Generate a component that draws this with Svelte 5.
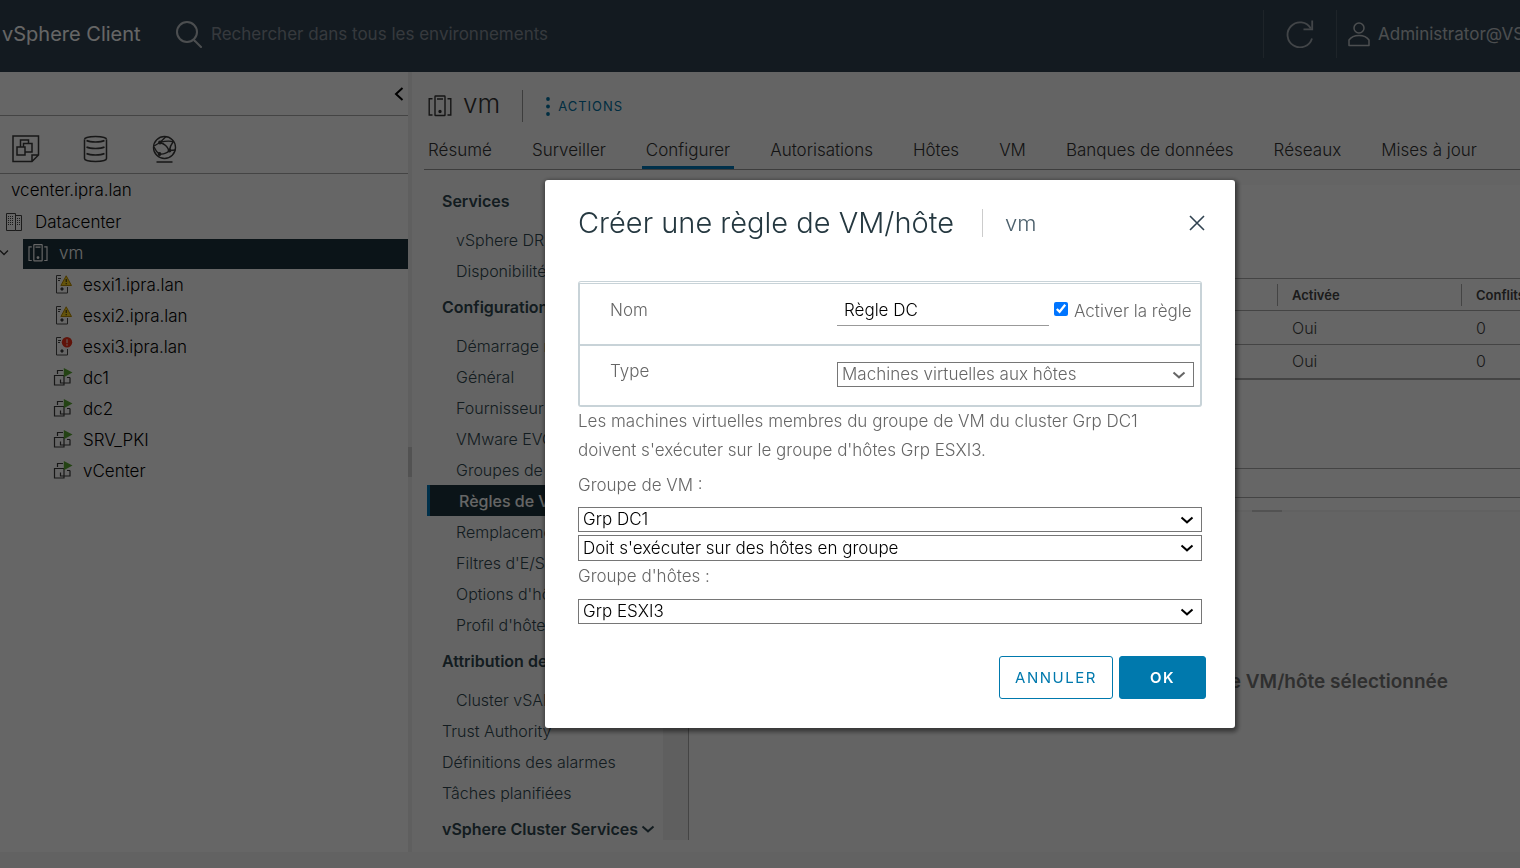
<script>
  const tabs = ['Résumé', 'Surveiller', 'Configurer', 'Autorisations', 'Hôtes', 'VM', 'Banques de données', 'Réseaux', 'Mises à jour'];

  const nodes = [
    { name: 'esxi1.ipra.lan', kind: 'host', state: 'warning' },
    { name: 'esxi2.ipra.lan', kind: 'host', state: 'warning' },
    { name: 'esxi3.ipra.lan', kind: 'host', state: 'error' },
    { name: 'dc1', kind: 'vm' },
    { name: 'dc2', kind: 'vm' },
    { name: 'SRV_PKI', kind: 'vm' },
    { name: 'vCenter', kind: 'vm' }
  ];

  const menu = [
    { text: 'Services', type: 'heading' },
    { text: 'vSphere DRS', type: 'sub' },
    { text: 'Disponibilité vSphere', type: 'sub' },
    { text: 'Configuration', type: 'heading' },
    { text: 'Démarrage rapide', type: 'sub' },
    { text: 'Général', type: 'sub' },
    { text: 'Fournisseur de clés', type: 'sub' },
    { text: 'VMware EVC', type: 'sub' },
    { text: 'Groupes de VM/hôte', type: 'sub' },
    { text: 'Règles de VM/hôte', type: 'sub', active: true },
    { text: 'Remplacements de VM', type: 'sub' },
    { text: "Filtres d'E/S", type: 'sub' },
    { text: "Options d'hôte", type: 'sub' },
    { text: "Profil d'hôte", type: 'sub' },
    { text: 'Attribution de licence', type: 'heading' },
    { text: 'Cluster vSAN', type: 'sub' },
    { text: 'Trust Authority', type: 'top' },
    { text: 'Définitions des alarmes', type: 'top' },
    { text: 'Tâches planifiées', type: 'top' },
    { text: 'vSphere Cluster Services', type: 'heading', chevron: true }
  ];

  const rules = [
    { enabled: 'Oui', conflicts: 0 },
    { enabled: 'Oui', conflicts: 0 }
  ];

  let ruleName = $state('Règle DC');
  let enabled = $state(true);
</script>

{#snippet clusterIcon(size)}
  <svg width={size} height={size} viewBox="0 0 24 24" fill="none" stroke="currentColor" stroke-width="1.4" aria-hidden="true">
    <rect x="7" y="2" width="10" height="19.5" rx="0.5" />
    <path d="M9 5h6M4.500 4.700H1.200v16.300H4.500M19.500 4.700h3.300v16.300H19.500" />
    <circle cx="12" cy="17.500" r="1" fill="currentColor" />
  </svg>
{/snippet}

{#snippet chevron()}
  <svg class="chevron" width="14" height="8" viewBox="0 0 14 8" fill="none" stroke="currentColor" stroke-width="2" aria-hidden="true">
    <path d="M1.500 1.500L7 6.300L12.500 1.500" />
  </svg>
{/snippet}

<div class="app">
  <header class="topbar">
    <span class="brand">vSphere Client</span>
    <label class="search">
      <svg width="28" height="28" viewBox="0 0 28 28" fill="none" stroke="currentColor" stroke-width="2" stroke-linecap="round" aria-hidden="true">
        <circle cx="12" cy="12" r="10" />
        <path d="M19.500 20.500L26 27" />
      </svg>
      <input type="search" placeholder="Rechercher dans tous les environnements" aria-label="Rechercher" />
    </label>
    <button class="refresh" aria-label="Actualiser">
      <svg width="28" height="28" viewBox="0 0 28 28" fill="none" stroke="currentColor" stroke-width="1.800" aria-hidden="true">
        <path d="M26 18.500A12.500 12.500 0 1 1 24.800 8.500" />
        <path d="M26.200 0.500v8.800h-8.700" />
      </svg>
    </button>
    <button class="user">
      <svg width="22" height="25" viewBox="0 0 22 25" fill="none" stroke="currentColor" stroke-width="1.500" aria-hidden="true">
        <circle cx="11" cy="6" r="5" />
        <path d="M1 23.500v-5.500c2-3 5.500-4.600 10-4.600s8 1.600 10 4.600v5.500z" stroke-linejoin="round" />
      </svg>
      Administrator@VSPHERE.LOCAL
    </button>
  </header>

  <div class="body">
    <aside class="inventory">
      <div class="collapse">
        <button aria-label="Réduire">
          <svg width="10" height="14" viewBox="0 0 10 14" fill="none" stroke="#000" stroke-width="2" aria-hidden="true"><path d="M8.500 1L2 7l6.500 6" /></svg>
        </button>
      </div>
      <div class="views">
        <button aria-label="Hôtes et clusters">
          <svg width="28" height="28" viewBox="0 0 28 28" fill="none" stroke="currentColor" stroke-width="1.500" aria-hidden="true">
            <path d="M1 1h25.500v19l-6.500 6.500H1zM20 26.500v-6.500h6.500" />
            <path d="M5 12h8v8H5zM8.500 12V5h8v4M11.500 12V8.500h8.500v8.500h-7" />
          </svg>
        </button>
        <button aria-label="Stockage">
          <svg width="28" height="28" viewBox="0 0 28 28" fill="none" stroke="currentColor" stroke-width="1.500" aria-hidden="true">
            <path d="M2.500 4.500v19c0 1.800 5 3 11 3s11-1.200 11-3v-19" />
            <path d="M2.500 4.500C2.500 2.700 7.500 1.500 13.500 1.500s11 1.200 11 3M4.500 5.500c2 1 5 1.500 9 1.500s7-.500 9-1.500M4.500 12c2 1 5 1.500 9 1.500s7-.500 9-1.500M4.500 18.500c2 1 5 1.500 9 1.500s7-.500 9-1.500" />
          </svg>
        </button>
        <button aria-label="Mise en réseau">
          <svg width="26" height="28" viewBox="0 0 26 28" fill="none" stroke="currentColor" stroke-width="1.400" aria-hidden="true">
            <circle cx="12.500" cy="12.500" r="11" />
            <path d="M8 7.500c5 1.500 7.500 4 9 8M8 7.500l6-6M8 7.500L2 11M8 7.500c5-1.500 9-2 13.500-.8M17.500 15.500c-3 3-6 4-10 3.500M17.500 15.500l6-.5M17.500 15.500c.5-4 1.500-6 3.500-8.500M2 12c1.500 3.500 3 5.500 5.500 7M4.500 27h16" />
            <circle cx="8" cy="7.500" r="1.200" fill="currentColor" />
            <circle cx="17.500" cy="15.500" r="1.200" fill="currentColor" />
            <circle cx="7.500" cy="19" r="1.200" fill="currentColor" />
          </svg>
        </button>
      </div>
      <ul class="tree">
        <li class="root">vcenter.ipra.lan</li>
        <li class="center">
          <svg width="17" height="18" viewBox="0 0 17 18" fill="none" stroke="#444" aria-hidden="true">
            <path d="M.500 .500h9v17H.500zM9.500 2.500h6v15h-6" />
            <path d="M2 3.500h6M2 5.500h6M2 7.500h6M2 9.500h6M2 11.500h6M11 5.500h4M11 7.500h4M11 9.500h4M11 11.500h4" stroke-dasharray="1 1" />
          </svg>
          Datacenter
        </li>
        <li class="cluster">
          <span class="caret"><svg width="12" height="8" viewBox="0 0 12 8" fill="none" stroke="#333" stroke-width="1.300" aria-hidden="true"><path d="M0 1.500l4 4 4-4" /></svg></span>
          <span class="selected">{@render clusterIcon(20)} vm</span>
        </li>
        {#each nodes as node}
          <li class="node">
            {#if node.kind === 'host'}
              <svg width="20" height="20" viewBox="0 0 20 20" fill="none" stroke="#4a4a4a" aria-hidden="true">
                <path d="M8 .500H3.500v17.500h11V12" />
                <path d="M5 3.500h3M5 5.500h2" />
                <circle cx="9" cy="14" r="1.200" fill="#333" />
                {#if node.state === 'warning'}
                  <path d="M13.200 .8l5.300 9.700H7.900z" fill="#fad21e" stroke="#b88a00" stroke-linejoin="round" />
                  <path d="M13.200 4v3M13.200 8v1.300" stroke="#222" />
                {:else}
                  <circle cx="14" cy="5.200" r="5.200" fill="#f0311a" stroke="none" />
                  <path d="M14 2.200v4M14 7.200v1.500" stroke="#fff" />
                {/if}
              </svg>
            {:else}
              <svg width="20" height="20" viewBox="0 0 20 20" fill="none" stroke="#3a3a3a" stroke-width="1.200" aria-hidden="true">
                <path d="M1.500 7.500h9.500v9.500H1.500zM4.500 6V2.500h5.500M7.500 11.500v3.500h9.500V9.500M14 9.500h3" />
                <path d="M10.800 0l8.700 4.500-8.700 4.700z" fill="#5aa832" stroke="none" />
              </svg>
            {/if}
            {node.name}
          </li>
        {/each}
      </ul>
    </aside>
    <div class="splitter"><span></span></div>

    <main>
      <div class="object">
        {@render clusterIcon(24)}
        <h1>vm</h1>
        <button class="actions">
          <svg width="4" height="19" viewBox="0 0 4 19" fill="currentColor" aria-hidden="true"><circle cx="2" cy="2" r="1.900" /><circle cx="2" cy="9.500" r="1.900" /><circle cx="2" cy="17" r="1.900" /></svg>
          ACTIONS
        </button>
      </div>
      <nav class="tabs">
        {#each tabs as tab}
          <button class:current={tab === 'Configurer'}>{tab}</button>
        {/each}
      </nav>
      <div class="work">
        <nav class="menu">
          {#each menu as item}
            <a href="#top" class={item.type} class:active={item.active}>
              {item.text}{#if item.chevron}{@render chevron()}{/if}
            </a>
          {/each}
        </nav>
        <div class="track"></div>
        <section class="pane">
          <table>
            <thead>
              <tr><th></th><th><span>Activée</span></th><th><span>Conflits</span></th></tr>
            </thead>
            <tbody>
              {#each rules as rule}
                <tr><td></td><td>{rule.enabled}</td><td>{rule.conflicts}</td></tr>
              {/each}
            </tbody>
          </table>
          <div class="strip"></div>
          <div class="grip"><span></span></div>
          <p class="empty">Aucune règle de VM/hôte sélectionnée</p>
        </section>
      </div>
    </main>
  </div>
  <div class="tasks"></div>
</div>

<div class="backdrop">
  <div class="dialog" role="dialog" aria-modal="true" aria-labelledby="dialog-title">
    <div class="head">
      <h2 id="dialog-title">Créer une règle de VM/hôte</h2>
      <span class="context">vm</span>
      <button class="close" aria-label="Fermer">
        <svg width="16" height="16" viewBox="0 0 16 16" fill="none" stroke="#314351" stroke-width="1.600" aria-hidden="true"><path d="M1 1l14 14M15 1L1 15" /></svg>
      </button>
    </div>
    <div class="form">
      <div class="row">
        <label class="name" for="rule-name">Nom</label>
        <div class="field">
          <input id="rule-name" class="text" type="text" bind:value={ruleName} />
          <label class="check"><input type="checkbox" bind:checked={enabled} />Activer la règle</label>
        </div>
      </div>
      <div class="row">
        <label class="name" for="rule-type">Type</label>
        <div class="select muted">
          <select id="rule-type"><option>Machines virtuelles aux hôtes</option></select>
          {@render chevron()}
        </div>
      </div>
    </div>
    <p class="summary">Les machines virtuelles membres du groupe de VM du cluster Grp DC1 doivent s'exécuter sur le groupe d'hôtes Grp ESXI3.</p>
    <label class="group" for="vm-group">Groupe de VM :</label>
    <div class="select">
      <select id="vm-group"><option>Grp DC1</option></select>
      {@render chevron()}
    </div>
    <div class="select second">
      <select aria-label="Condition"><option>Doit s'exécuter sur des hôtes en groupe</option></select>
      {@render chevron()}
    </div>
    <label class="group hosts" for="host-group">Groupe d'hôtes :</label>
    <div class="select">
      <select id="host-group"><option>Grp ESXI3</option></select>
      {@render chevron()}
    </div>
    <div class="buttons">
      <button class="cancel">ANNULER</button>
      <button class="ok">OK</button>
    </div>
  </div>
</div>

<style>
  :global(body) { margin: 0; overflow: hidden; }
  * { box-sizing: border-box; }
  .app, .backdrop { font-family: Inter, "Open Sans", sans-serif; font-size: 17px; font-weight: 300; }
  button { font: inherit; color: inherit; background: none; border: 0; padding: 0; margin: 0; }
  svg { flex: none; display: block; }
  .app { display: flex; flex-direction: column; height: 100vh; overflow: hidden; background: #fafafa; color: #000; }

  .topbar { flex: none; display: flex; align-items: center; height: 72px; padding-bottom: 4px; background: #314351; color: #bfc4c8; }
  .brand { width: 175px; padding-left: 2px; color: #fff; font-size: 20px; font-weight: 400; white-space: nowrap; }
  .search { flex: 1; display: flex; align-items: center; gap: 8px; }
  .search input { flex: 1; border: 0; outline: 0; background: none; font: inherit; font-weight: 400; padding: 0; color: #fff; }
  .search input::placeholder { color: #87909a; opacity: 1; }
  .refresh, .user { height: 48px; border-left: 1px solid #4d5b67; }
  .refresh { width: 73px; display: flex; align-items: center; justify-content: center; color: #a5adb4; }
  .user { flex: 0 0 184px; display: flex; align-items: center; gap: 8px; padding-left: 11px; overflow: hidden; white-space: nowrap; font-weight: 400; }

  .body { flex: 1; display: flex; min-height: 0; }
  .inventory { flex: 0 0 408px; background: #fff; }
  .collapse { height: 44px; display: flex; align-items: center; justify-content: flex-end; padding-right: 4px; border-bottom: 1px solid #aaa; }
  .views { height: 58px; display: flex; align-items: center; gap: 42px; padding: 8px 0 0 12px; border-bottom: 1px solid #aaa; color: #3a3a3a; }
  .tree { list-style: none; margin: 0; padding: 0; }
  .tree li { display: flex; align-items: center; height: 31px; }
  .tree .root { padding-left: 11px; margin-bottom: 1px; }
  .tree .center { padding-left: 6px; gap: 12px; }
  .tree .cluster { height: 32px; align-items: flex-end; }
  .tree .node { padding-left: 53px; gap: 10px; }
  .caret { width: 23px; padding-bottom: 12px; }
  .selected { flex: 1; display: flex; align-items: center; gap: 11px; height: 30px; padding: 0 0 3px 5px; background: #1c343c; color: #fff; }
  .splitter { flex: 0 0 4px; display: flex; align-items: center; background: #eee; }
  .splitter span { width: 4px; height: 30px; background: #ccc; }

  main { flex: 1; min-width: 0; display: flex; flex-direction: column; padding-left: 12px; }
  .object { display: flex; align-items: center; height: 64px; padding: 4px 0 0 4px; color: #333; }
  h1 { margin: 0 0 4px 11px; padding-right: 22px; font-size: 26px; line-height: 32px; font-weight: 300; }
  .actions { display: flex; align-items: center; gap: 8px; height: 32px; padding-left: 23px; border-left: 1px solid #999; color: #0072a3; font-size: 13px; font-weight: 400; letter-spacing: 1px; }
  .tabs { flex: none; display: flex; gap: 32px; height: 34px; border-bottom: 1px solid #999; }
  .tabs button { padding: 0 4px 2px; border-bottom: 3px solid transparent; white-space: nowrap; color: #333; }
  .tabs .current { border-color: #0079b8; }
  .work { flex: 1; min-height: 0; display: flex; padding: 15px 0 12px; }
  .menu { flex: 0 0 239px; padding-left: 3px; overflow: hidden; }
  .menu a { display: flex; align-items: center; gap: 3px; height: 31px; padding-left: 15px; color: #304850; text-decoration: none; white-space: nowrap; font-size: 16px; }
  .menu .sub { padding-left: 29px; }
  .menu .heading { margin: 5px 0 8px; font-weight: 600; }
  .menu .heading:first-child { margin-top: 0; }
  .menu .active { border-left: 3px solid #0079b8; background: #1c343c; color: #fff; font-weight: 500; }
  .track { flex: 0 0 26px; background: #ededed; border-right: 1px solid #aaa; }
  .pane { flex: 1; min-width: 0; display: flex; flex-direction: column; padding-top: 93px; background: #fff; }
  table { width: 100%; table-layout: fixed; border-collapse: collapse; font-size: 16px; color: #444; border-top: 1px solid #aaa; border-bottom: 2px solid #aaa; }
  th { height: 32px; padding: 0; text-align: left; font-size: 13px; font-weight: 600; }
  th span { display: block; padding-left: 14px; line-height: 22px; border-left: 1px solid #aaa; }
  th:nth-child(2) { width: 184px; }
  th:nth-child(3) { width: 59px; }
  td { height: 34px; padding: 0 0 0 15px; border-top: 1px solid #aaa; }
  .strip { flex: none; height: 30px; margin-top: 88px; border: solid #aaa; border-width: 1px 0; }
  .grip { display: flex; justify-content: flex-end; height: 2px; margin-top: 12px; padding-right: 238px; background: #f3f3f3; }
  .grip span { width: 30px; background: #ccc; }
  .empty { flex: 1; display: flex; align-items: center; justify-content: flex-end; margin: 0; padding: 12px 72px 0 0; background: #fafafa; color: #777; font-size: 19px; font-weight: 600; white-space: nowrap; }
  .tasks { flex: none; height: 16px; background: #f5f5f5; }

  .backdrop { position: fixed; inset: 0; display: flex; align-items: center; justify-content: center; padding: 40px 0 0 260px; background: rgba(0, 0, 0, 0.6); }
  .dialog { width: 690px; padding: 27px 33px 29px; border-radius: 3px; background: #fff; box-shadow: 1px 2px 4px 2px rgba(0, 0, 0, 0.45); color: #666; }
  .head { display: flex; align-items: center; height: 32px; margin-bottom: 42px; padding-right: 1px; }
  h2 { margin: 0; padding-right: 28px; font-size: 29px; line-height: 32px; font-weight: 300; color: #253840; white-space: nowrap; }
  .context { padding-left: 22px; border-left: 1px solid #ccc; font-size: 22px; line-height: 28px; color: #4c606c; }
  .close { margin-left: auto; padding: 4px 0 4px 4px; margin-right: -4px; }
  .form { border: 2px solid #c8d3d8; border-top: 3px double #c8d3d8; border-radius: 3px; }
  .row { display: flex; height: 60px; padding: 11px 6px 0 30px; }
  .row + .row { border-top: 2px solid #c8d3d8; height: 61px; padding-top: 16px; }
  .name { width: 227px; line-height: 30px; }
  .row + .row .name { line-height: 18px; }
  .field { flex: 1; display: flex; }
  .text { width: 212px; height: 31px; padding: 0 7px; border: 0; border-bottom: 1px solid #999; outline: 0; background: none; font: inherit; color: #000; }
  .check { display: flex; align-items: center; gap: 6px; height: 31px; padding-left: 5px; white-space: nowrap; }
  .check input { width: 14px; height: 14px; margin: 0 0 4px; accent-color: #0075ff; }
  .select { position: relative; flex: 1; height: 25px; color: #000; }
  .muted { color: #666; }
  select { display: block; width: 100%; height: 100%; padding: 0 4px 1px; appearance: none; border: 1px solid #767676; border-radius: 0; background: #fff; font: inherit; color: inherit; }
  .select :global(.chevron) { position: absolute; right: 8px; top: 9px; pointer-events: none; }
  .summary { margin: 0; padding-right: 32px; line-height: 29px; }
  .group { display: block; height: 42px; line-height: 40px; }
  .second { margin-top: 3px; height: 26px; }
  .hosts { height: 38px; line-height: 31px; }
  .buttons { display: flex; justify-content: flex-end; gap: 6px; margin: 32px -4px 0 0; }
  .buttons button { height: 43px; border: 1px solid #0079ad; border-radius: 3px; font-size: 15px; letter-spacing: 1.5px; }
  .cancel { width: 114px; color: #0079ad; font-weight: 400; }
  .ok { width: 87px; background: #0079ad; color: #fff; font-weight: 600; }
</style>
